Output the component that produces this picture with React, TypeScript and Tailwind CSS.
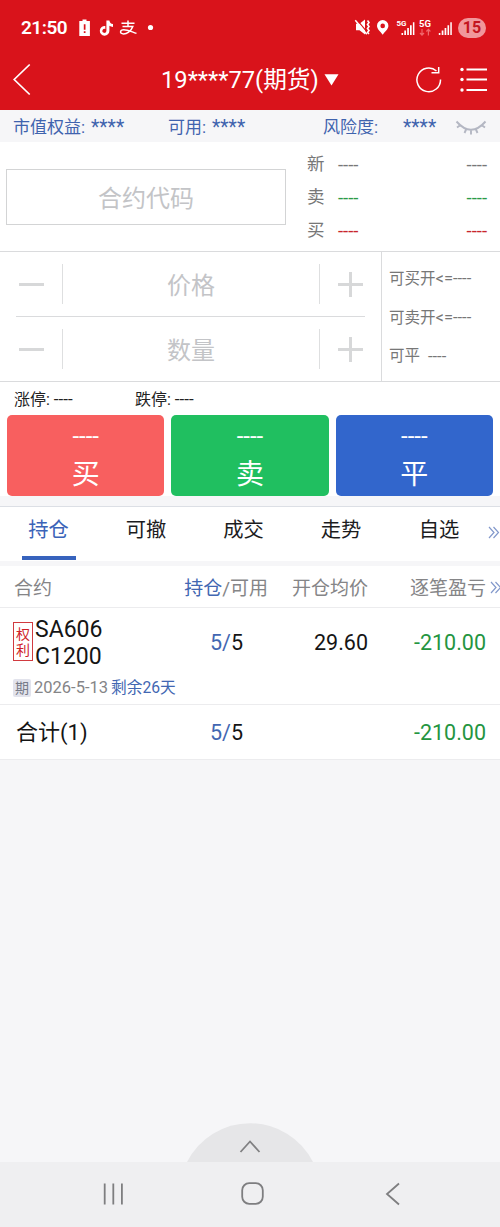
import type { ReactNode } from "react";

const DASH = "----";

function StatusBar() {
  return (
    <div className="flex h-[55px] items-center pl-[21px] text-white">
      <span className="w-[58px] text-[19px] leading-[22px] font-semibold tracking-[-0.5px]">21:50</span>
      <svg className="shrink-0" width="80" height="20" viewBox="79 18 80 20" fill="#fff">
        <path d="M82.5 19.5h4v1.4h3.4V36H79.3V20.9h3.2z" />
        <path d="M83.8 24.2h1.7v5.6h-1.7zM83.8 31.2h1.7v1.8h-1.7z" fill="#d9131b" />
        <path d="M106.400 20.500h3c.2 2 1.500 3.300 3.600 3.500v2.900c-1.400 0-2.600-.4-3.600-1.100v5a4.800 4.800 0 1 1-4.100-4.700v3a2 2 0 1 0 1.100 1.700z" />
        <path d="M121.500 23.300h13M128 20.500v6M122.500 26.600h10.300c-1.800 5-6.200 7.300-9.300 7.300-4.200 0-3.700-4.200.3-4.200 4 0 8 2.200 12.700 3.700" fill="none" stroke="#fff" strokeWidth="1.500" />
        <circle cx="150.500" cy="27.500" r="2.600" />
      </svg>
      <svg className="ml-[195px] shrink-0" width="98" height="22" viewBox="353 17 98 22" fill="#fff">
        <path d="M355 23.700h3.500l5.500-4.200v15l-5.500-4.200H355z" />
        <path d="M355.800 19.700l9.500 11.500" stroke="#d9131b" strokeWidth="1.200" />
        <path d="M354.300 20.300l11.500 14" stroke="#fff" strokeWidth="1.500" />
        <path d="M366.500 20.500l1.500 2-1.500 2 1.500 2-1.500 2 1.500 2-1.500 2 1.500 1.500" stroke="#fff" strokeWidth="1.600" fill="none" />
        <path fillRule="evenodd" d="M381.700 20a5.700 5.700 0 0 0-5.700 5.700c0 3.500 3.200 5.300 5.700 9.100 2.500-3.800 5.700-5.600 5.700-9.100a5.700 5.700 0 0 0-5.700-5.700zm0 3.600a2.300 2.300 0 1 1 0 4.600 2.300 2.300 0 0 1 0-4.600z" />
        <text x="395.500" y="26" fontSize="8" fontWeight="700" textLength="10">5G</text>
        <path d="M400.500 33h1.600v2h-1.600zM403.300 30.500h1.700V35h-1.700zM406.200 28h1.700v7h-1.700zM409 25.200h1.700V35H409zM411.900 22.200h1.500V35h-1.500z" />
        <text x="418" y="27" fontSize="9.500" fontWeight="700" textLength="12">5G</text>
        <path d="M421 29v6M419 33l2 2.200 2-2.200M427.400 35.500v-6M425.400 31.500l2-2.200 2 2.200" stroke="#f0686c" strokeWidth="1.200" fill="none" />
        <path d="M437.800 33h1.600v2h-1.600zM440.700 30.500h1.700V35h-1.700zM443.600 28h1.700v7h-1.700zM446.500 25.200h1.600V35h-1.600zM449.300 22.200h1.500V35h-1.500z" />
      </svg>
      <span className="ml-[6px] flex h-5 w-[28px] items-center justify-center rounded-full bg-[#f1979b] text-[16px] leading-5 font-bold text-[#c3151f]">15</span>
    </div>
  );
}

function TitleBar() {
  return (
    <div className="flex h-[55px] items-start pl-[13px] text-white">
      <svg className="mt-[8px] shrink-0" width="18" height="33" viewBox="0 0 18 33" fill="none" stroke="#fff" strokeWidth="1.700">
        <path d="M16.700 1.500L1.200 16.500l15.500 15" />
      </svg>
      <h1 className="mt-[9px] ml-[130px] w-[163px] text-[23.700px] leading-[32px] font-normal whitespace-nowrap">19****77(期货)</h1>
      <svg className="mt-[19px] shrink-0" width="15" height="12" viewBox="0 0 15 12" fill="#fff">
        <path d="M.5.300h14L7.500 11.500z" />
      </svg>
      <svg className="mt-[10px] ml-[77px] shrink-0" width="26" height="28" viewBox="0 0 26 28" fill="none" stroke="#fff" strokeWidth="1.500">
        <path d="M24.500 14.500A11.800 11.800 0 1 1 20.500 6M15.500 7.700h7.200V2" />
      </svg>
      <svg className="mt-[12px] ml-[18px] shrink-0" width="28" height="26" viewBox="0 0 28 26" fill="#fff">
        <circle cx="2" cy="2.500" r="1.700" /><circle cx="2" cy="12.500" r="1.700" /><circle cx="2" cy="23" r="1.700" />
        <path d="M6.500 1.500h20.500v2H6.500zM6.500 11.600h20.500v2H6.500zM6.500 22h20.500v2H6.500z" />
      </svg>
    </div>
  );
}

function AccountBar() {
  return (
    <div className="flex h-[32px] items-center bg-[#f6f6f8] pt-[2px] pl-[13px] text-[17px] leading-[30px] whitespace-nowrap text-[#3f63ae]">
      <span className="w-[78px]">市值权益:</span>
      <span className="w-[77px] pt-[2px] text-[19.300px]">****</span>
      <span className="w-[44px]">可用:</span>
      <span className="w-[111px] pt-[2px] text-[19.300px]">****</span>
      <span className="w-[80px]">风险度:</span>
      <span className="w-[52px] pt-[2px] text-[19.300px]">****</span>
      <svg className="shrink-0" width="32" height="17" viewBox="0 0 32 17" fill="none" stroke="#b4b7c3" strokeWidth="1.900">
        <path d="M1.500 2.500Q16 19 30.500 2.500M5.500 6L2 8.500M11.500 9.500L9.500 14M16 10.500v5M20.500 9.500l2 4.500M26.500 6l3.500 2.500" />
      </svg>
    </div>
  );
}

function QuoteRow({ label, tone }: { label: string; tone: string }) {
  return (
    <div className="flex h-[33px] items-center text-[17.500px] leading-[33px]">
      <span className="w-[31px] text-[#777]">{label}</span>
      <span className={`flex-1 pt-[2px] text-[18.500px] ${tone}`}>{DASH}</span>
      <span className={`pt-[2px] text-[18.500px] ${tone}`}>{DASH}</span>
    </div>
  );
}

function Quote() {
  return (
    <section className="flex h-[110px] border-b border-[#dadbdd] pr-[13px] pl-[6px]">
      <div className="mt-[27px] flex h-[56px] w-[280px] items-center justify-center border border-[#d3d4d5] pt-[4px] text-[24px] leading-[50px] text-[#c3c4c7]">合约代码</div>
      <div className="ml-[21px] flex-1 pt-[6px]">
        <QuoteRow label="新" tone="text-[#777]" />
        <QuoteRow label="卖" tone="text-[#2b9b47]" />
        <QuoteRow label="买" tone="text-[#c8262c]" />
      </div>
    </section>
  );
}

function Stepper({ label }: { label: string }) {
  return (
    <div className="flex h-[64px] items-center">
      <div className="flex w-[62px] justify-center">
        <div className="h-[3px] w-[25px] bg-[#d7d8d9]" />
      </div>
      <div className="flex h-[40px] w-[258px] items-center justify-center border-x border-[#dedfe0] pt-[4px] text-[24px] leading-[36px] text-[#c3c4c7]">{label}</div>
      <svg className="ml-[18px]" width="25" height="25" viewBox="0 0 25 25" fill="#d7d8d9">
        <path d="M0 11h11V0h3v11h11v3H14v11h-3V14H0z" />
      </svg>
    </div>
  );
}

function OrderEntry() {
  return (
    <section className="flex h-[130px] border-b border-[#dadbdd]">
      <div className="w-[382px] border-r border-[#dadbdd]">
        <Stepper label="价格" />
        <div className="mr-[16px] ml-[16px] h-px bg-[#dadbdd]" />
        <Stepper label="数量" />
      </div>
      <div className="pt-[7px] pl-[7px] text-[15.500px] leading-[39px] whitespace-nowrap text-[#777]">
        <div className="h-[39px]">可买开<span className="text-[16.500px]">&lt;={DASH}</span></div>
        <div className="h-[39px]">可卖开<span className="text-[16.500px]">&lt;={DASH}</span></div>
        <div className="flex h-[39px]"><span className="w-[39px]">可平</span><span className="text-[16.500px]">{DASH}</span></div>
      </div>
    </section>
  );
}

function TradeButton({ label, tone }: { label: string; tone: string }) {
  return (
    <button className={`flex h-[81px] flex-1 flex-col items-center rounded-[5px] text-white ${tone}`}>
      <span className="mt-[7px] h-[28px] text-[24px] leading-[28px]">{DASH}</span>
      <span className="mt-[6px] text-[28px] leading-[38px]">{label}</span>
    </button>
  );
}

function Chevrons() {
  return (
    <svg className="shrink-0" width="12" height="13" viewBox="0 0 12 13" fill="none" stroke="#8298cb" strokeWidth="1.200">
      <path d="M1 1l5 5.500L1 12M5.500 1l5 5.500-5 5.500" />
    </svg>
  );
}

function Tabs() {
  return (
    <nav className="flex h-[54px] items-start bg-white text-[20.300px] leading-[47px] text-[#1c1c1e]">
      <div className="flex h-[53px] w-[97px] flex-col items-center text-[#3a63b8]">
        <span className="h-[48.500px]">持仓</span>
        <span className="h-[4.500px] w-[54px] bg-[#3763bd]" />
      </div>
      <span className="w-[98px] text-center">可撤</span>
      <span className="w-[97px] text-center">成交</span>
      <span className="w-[98px] text-center">走势</span>
      <span className="w-[98px] text-center">自选</span>
      <span className="mt-[19px]"><Chevrons /></span>
    </nav>
  );
}

function Row({ className, children }: { className: string; children: ReactNode }) {
  return <div className={`grid grid-cols-[170px_98px_100px_118px_14px] items-start border-b border-[#ececee] bg-white whitespace-nowrap ${className}`}>{children}</div>;
}

function Holdings() {
  return (
    <section>
      <Row className="h-[42px] text-[19px] leading-[45px] text-[#858587]">
        <span className="pl-[14px]">合约</span>
        <span className="text-right"><span className="text-[#4267b2]">持仓</span>/可用</span>
        <span className="text-right">开仓均价</span>
        <span className="-ml-px text-right">逐笔盈亏</span>
        <span className="mt-[15px] ml-[4px]"><Chevrons /></span>
      </Row>
      <Row className="h-[97px] text-[21.500px] leading-[70px] text-[#151515]">
        <div className="pl-[13px]">
          <div className="flex pt-[8px]">
            <span className="mt-[6px] flex h-[39px] w-[20px] flex-col items-center justify-center border-[1.500px] border-[#d13a3f] text-[14px] leading-[16px] text-[#cf2229]"><span>权</span><span>利</span></span>
            <span className="ml-[2px] text-[23px] leading-[27px]">SA606<br />C1200</span>
          </div>
          <div className="mt-[8px] flex items-center text-[16.500px] leading-[20px] text-[#858587]">
            <span className="mr-[3px] flex h-[18px] w-[18px] shrink-0 items-center justify-center rounded-[2px] bg-[#e2e3ec] text-[14px] leading-[18px] text-[#777b88]">期</span>
            <span className="shrink-0">2026-5-13</span>
            <span className="ml-[3px] shrink-0 text-[15.700px] text-[#4267b2]">剩余26天</span>
          </div>
        </div>
        <span className="pr-[25px] text-right"><span className="text-[#4267b2]">5/</span>5</span>
        <span className="text-right">29.60</span>
        <span className="text-right text-[#24953f]">-210.00</span>
      </Row>
      <Row className="h-[55px] text-[21.500px] leading-[56px] text-[#151515]">
        <span className="pl-[16px] text-[22px]">合计(1)</span>
        <span className="pr-[25px] text-right"><span className="text-[#4267b2]">5/</span>5</span>
        <span />
        <span className="text-right text-[#24953f]">-210.00</span>
      </Row>
    </section>
  );
}

function BottomNav() {
  return (
    <footer className="flex h-[65px] items-center bg-[#efeff1] pb-[2px] pl-[103px]">
      <svg width="21" height="22" viewBox="0 0 21 22" stroke="#7e7e80" strokeWidth="1.800"><path d="M1.700 .5v21M10.300.500v21M18.900.500v21" /></svg>
      <svg className="ml-[117px]" width="23" height="23" viewBox="0 0 23 23" fill="none" stroke="#7e7e80" strokeWidth="1.800"><rect x="1.200" y="1.200" width="20.600" height="20.600" rx="7" /></svg>
      <svg className="ml-[121px]" width="16" height="24" viewBox="0 0 16 24" fill="none" stroke="#7e7e80" strokeWidth="1.800"><path d="M14 1.500L2 12l12 10.500" /></svg>
    </footer>
  );
}

export default function App() {
  return (
    <main className="flex h-[1227px] w-[500px] flex-col overflow-hidden bg-[#f6f6f8] font-[Roboto,'Noto_Sans_CJK_SC',sans-serif]">
      <header className="h-[110px] shrink-0 bg-[#d9131b]">
        <StatusBar />
        <TitleBar />
      </header>
      <AccountBar />
      <div className="bg-white">
        <Quote />
        <OrderEntry />
        <div className="flex h-[33px] pl-[14px] text-[16px] leading-[34px] text-[#222]">
          <span className="w-[121px]">涨停: <span className="text-[17px]">{DASH}</span></span>
          <span>跌停: <span className="text-[17px]">{DASH}</span></span>
        </div>
        <div className="flex gap-[7px] pr-[7px] pl-[7px]">
          <TradeButton label="买" tone="bg-[#f85f5f]" />
          <TradeButton label="卖" tone="bg-[#20bf60]" />
          <TradeButton label="平" tone="bg-[#3266cc]" />
        </div>
      </div>
      <div className="h-[11px] shrink-0 border-b border-[#dcdfe5]" />
      <Tabs />
      <div className="h-[5px] shrink-0" />
      <Holdings />
      <div className="flex flex-1 items-end justify-center">
        <svg width="126" height="40" viewBox="0 0 126 40">
          <path d="M0 40A70.500 70.500 0 0 1 126 40z" fill="#e6e6e8" />
          <path d="M53.500 30L63 19.500 72.500 30" fill="none" stroke="#808082" strokeWidth="1.800" />
        </svg>
      </div>
      <BottomNav />
    </main>
  );
}
